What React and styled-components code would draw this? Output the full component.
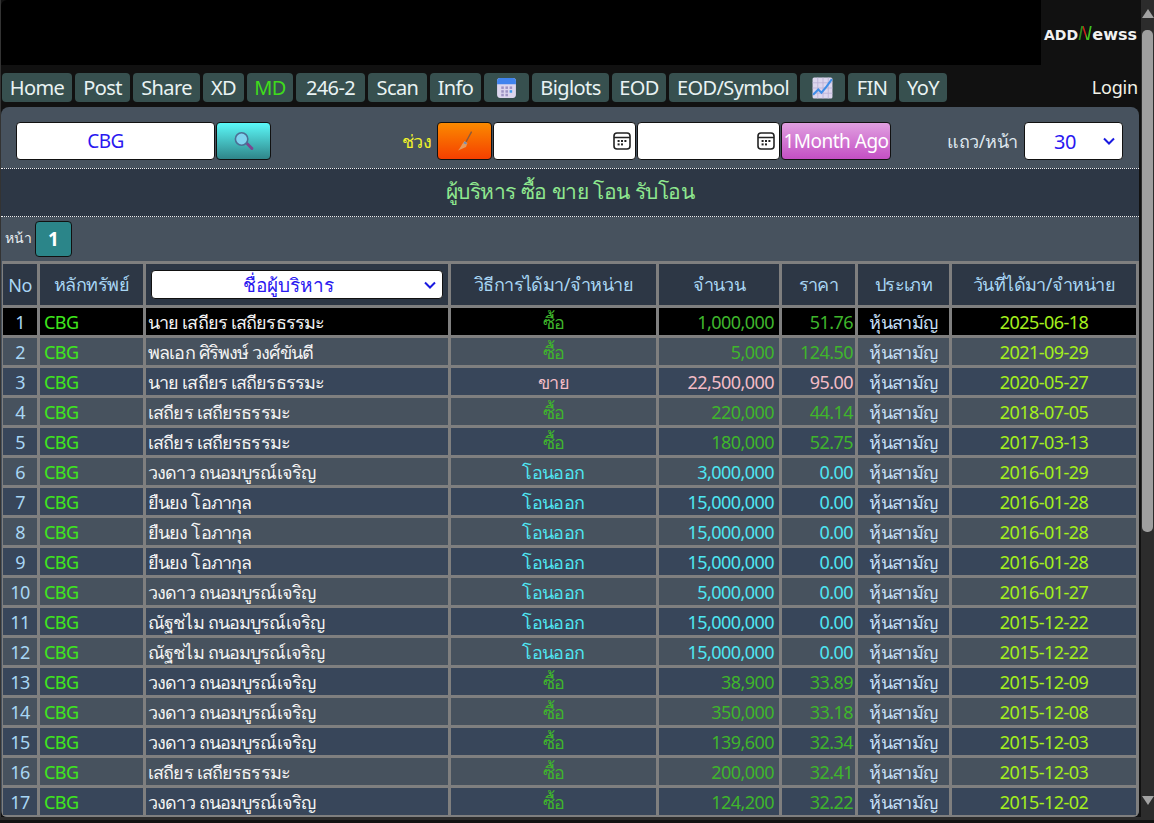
import React from "react";
import styled, { createGlobalStyle } from "styled-components";

const GlobalStyle = createGlobalStyle`
  html, body {
    margin: 0;
    height: 100%;
    overflow: hidden;
    background: #111;
  }
  * { box-sizing: border-box; }
`;

const FONT = `"Noto Sans", "Open Sans", "Liberation Sans", sans-serif`;

const NAV = [
  { label: "Home", width: 70 },
  { label: "Post", width: 55 },
  { label: "Share", width: 67 },
  { label: "XD", width: 41 },
  { label: "MD", width: 46 },
  { label: "246-2", width: 69 },
  { label: "Scan", width: 59 },
  { label: "Info", width: 51 },
  { icon: "calendar", width: 45 },
  { label: "Biglots", width: 77 },
  { label: "EOD", width: 54 },
  { label: "EOD/Symbol", width: 128 },
  { icon: "chart", width: 45 },
  { label: "FIN", width: 48 },
  { label: "YoY", width: 48 },
];

const SET = "เสถียร เสถียรธรรมะ";
const NAI = "นาย เสถียร เสถียรธรรมะ";
const WONG = "วงดาว ถนอมบูรณ์เจริญ";
const YUEN = "ยืนยง โอภากุล";
const NAT = "ณัฐชไม ถนอมบูรณ์เจริญ";
const BUY = "ซื้อ";
const SELL = "ขาย";
const OUT = "โอนออก";

const rows = [
  [NAI, BUY, "1,000,000", "51.76", "2025-06-18"],
  ["พลเอก ศิริพงษ์ วงศ์ขันตี", BUY, "5,000", "124.50", "2021-09-29"],
  [NAI, SELL, "22,500,000", "95.00", "2020-05-27"],
  [SET, BUY, "220,000", "44.14", "2018-07-05"],
  [SET, BUY, "180,000", "52.75", "2017-03-13"],
  [WONG, OUT, "3,000,000", "0.00", "2016-01-29"],
  [YUEN, OUT, "15,000,000", "0.00", "2016-01-28"],
  [YUEN, OUT, "15,000,000", "0.00", "2016-01-28"],
  [YUEN, OUT, "15,000,000", "0.00", "2016-01-28"],
  [WONG, OUT, "5,000,000", "0.00", "2016-01-27"],
  [NAT, OUT, "15,000,000", "0.00", "2015-12-22"],
  [NAT, OUT, "15,000,000", "0.00", "2015-12-22"],
  [WONG, BUY, "38,900", "33.89", "2015-12-09"],
  [WONG, BUY, "350,000", "33.18", "2015-12-08"],
  [WONG, BUY, "139,600", "32.34", "2015-12-03"],
  [SET, BUY, "200,000", "32.41", "2015-12-03"],
  [WONG, BUY, "124,200", "32.22", "2015-12-02"],
];

const actionColor = { [BUY]: "#3fb52c", [SELL]: "#f3bcc6", [OUT]: "#4fe6f2" };

const CalendarEmoji = () => (
  <svg width="21" height="22" viewBox="0 0 20 21">
    <rect x="1" y="1" width="18" height="19" rx="3" fill="#dcd6ee" />
    <path d="M1 7V4a3 3 0 0 1 3-3h12a3 3 0 0 1 3 3v3z" fill="#3f83ee" />
    <g fill="#9d93c4">
      <rect x="5" y="9" width="2.4" height="2.4" />
      <rect x="9" y="9" width="2.4" height="2.4" />
      <rect x="13" y="9" width="2.4" height="2.4" />
      <rect x="5" y="12.6" width="2.4" height="2.4" />
      <rect x="9" y="12.6" width="2.4" height="2.4" />
      <rect x="5" y="16" width="2.4" height="2.4" />
      <rect x="9" y="16" width="2.4" height="2.4" />
    </g>
    <rect x="13" y="12.6" width="2.4" height="2.4" fill="#3f9bee" />
  </svg>
);

const ChartEmoji = () => (
  <svg width="21" height="22" viewBox="0 0 20 21">
    <rect x="0.5" y="0.5" width="19" height="20" rx="1.5" fill="#dcd6ee" />
    <path d="M0.5 5.5h19M0.5 10.5h19M0.5 15.5h19M5.5 .5v20M10.5 .5v20M15.5 .5v20" stroke="#b9b1d6" strokeWidth="0.8" />
    <path d="M1 17l5-5 3 3 5-6 5-7" fill="none" stroke="#3f8ee8" strokeWidth="2" />
  </svg>
);

const Magnifier = () => (
  <svg width="20" height="21" viewBox="0 0 20 21">
    <path d="M11.5 13l2-2 5.5 5.5a1.5 1.5 0 0 1-2 2.2z" fill="#7a4790" />
    <circle cx="7.6" cy="8" r="6.2" fill="#7fd3ef" stroke="#4c6f95" strokeWidth="1.6" />
  </svg>
);

const Broom = () => (
  <svg width="16" height="20" viewBox="0 0 16 20">
    <path d="M14.6 0.6L8.4 12" stroke="#8a5a3a" strokeWidth="1.4" />
    <path d="M7.5 10l3 2-1.5 4-8 3.4c2-2 3.4-5.4 6.5-9.4z" fill="#e89a5c" />
    <path d="M7.6 10.6l2.2 1.5-.5 1.5-2.8-1.4z" fill="#6f8fb8" />
  </svg>
);

const PickerIcon = () => (
  <svg width="18" height="18" viewBox="0 0 18 18">
    <rect x="1" y="1" width="16" height="16" rx="3" fill="none" stroke="#222" strokeWidth="1.6" />
    <path d="M1 5.5h16" stroke="#222" strokeWidth="1.6" />
    <g fill="#222">
      <rect x="4.6" y="8" width="2" height="2" />
      <rect x="8" y="8" width="2" height="2" />
      <rect x="11.4" y="8" width="2" height="2" />
      <rect x="4.6" y="11.4" width="2" height="2" />
      <rect x="8" y="11.4" width="2" height="2" />
    </g>
  </svg>
);

const Chevron = () => (
  <svg width="12" height="8" viewBox="0 0 12 8">
    <path d="M1 1.5l5 5 5-5" fill="none" stroke="#1a1ae0" strokeWidth="2" />
  </svg>
);

const Page = styled.div`
  width: 1154px;
  height: 823px;
  display: flex;
  flex-direction: column;
  overflow: hidden;
  background: #111;
  font-family: ${FONT};
`;

const Body = styled.div`
  height: 817px;
  flex-shrink: 0;
  display: flex;
`;

const BottomBand = styled.div`
  height: 3px;
  flex-shrink: 0;
  background: #2c2c2c;
`;

const Main = styled.div`
  width: 1141px;
  display: flex;
  flex-direction: column;
  border-left: 1px solid #333;
`;

const ScrollBar = styled.div`
  width: 13px;
  background: #2c2c2c;
  display: flex;
  flex-direction: column;
  align-items: center;
  padding: 9px 0 12px;
`;

const ArrowUp = styled.div`
  border-left: 6px solid transparent;
  border-right: 6px solid transparent;
  border-bottom: 9px solid #a3a3a3;
`;

const ArrowDown = styled.div`
  border-left: 6px solid transparent;
  border-right: 6px solid transparent;
  border-top: 9px solid #a3a3a3;
`;

const Thumb = styled.div`
  width: 11px;
  height: 502px;
  margin: 12px 0 auto;
  border-radius: 5px;
  background: #9f9f9f;
`;

const TopBar = styled.div`
  height: 65px;
  flex-shrink: 0;
  display: flex;
`;

const Banner = styled.div`
  width: 1040px;
  background: #000;
  border-top-left-radius: 6px;
`;

const Logo = styled.div`
  flex: 1;
  display: flex;
  align-items: baseline;
  justify-content: center;
  padding: 22px 1px 0 0;
  color: #f1f1f1;
  font: 700 14px "DejaVu Sans", sans-serif;
  white-space: nowrap;
`;

const LogoN = styled.span`
  font-size: 19px;
  font-style: italic;
  font-weight: 400;
  background: linear-gradient(90deg, #2c8a1c 0 35%, #c8201a 35% 60%, #3fc01f 60%);
  -webkit-background-clip: text;
  background-clip: text;
  color: transparent;
`;

const LogoTail = styled.span`
  font-size: 16px;
`;

const NavBar = styled.nav`
  height: 42px;
  flex-shrink: 0;
  display: flex;
  align-items: flex-start;
  gap: 3px;
  padding: 8px 0 0 1px;
`;

const NavItem = styled.a`
  width: ${(p) => p.$width}px;
  height: 29px;
  display: flex;
  align-items: center;
  justify-content: center;
  background: #37504f;
  border-radius: 4px;
  font-size: 20px;
  letter-spacing: -0.6px;
  color: ${(p) => (p.$active ? "#3fdc1c" : "#e9f3f3")};
`;

const LoginLink = styled.a`
  margin-left: auto;
  margin-right: 3px;
  padding-top: 2px;
  font-size: 18px;
  letter-spacing: -0.2px;
  color: #f3f3e8;
`;

const Panel = styled.main`
  flex: 1;
  width: 1138px;
  background: #47525e;
  border-radius: 8px 8px 6px 6px;
  overflow: hidden;
  display: flex;
  flex-direction: column;
`;

const Filters = styled.div`
  height: 61px;
  flex-shrink: 0;
  padding: 15px 16px 0 15px;
  display: flex;
  align-items: flex-start;
`;

const boxStyles = `
  height: 38px;
  background: #fff;
  border: 1px solid #111;
  border-radius: 4px;
  display: flex;
  align-items: center;
`;

const SymbolBox = styled.div`
  ${boxStyles}
  width: 199px;
  padding-right: 20px;
  justify-content: center;
  color: #2a18f0;
  font-size: 19px;
  letter-spacing: -0.5px;
`;

const ColorButton = styled.button`
  height: 38px;
  width: ${(p) => p.$width}px;
  margin-left: 1px;
  padding: 0;
  border: 1px solid #111;
  border-radius: 4px;
  background: linear-gradient(${(p) => p.$from}, ${(p) => p.$to});
  color: #fff;
  font: inherit;
  font-size: 19px;
  letter-spacing: -0.5px;
  white-space: nowrap;
  display: flex;
  align-items: center;
  justify-content: center;
`;

const RangeLabel = styled.span`
  margin-left: auto;
  margin-right: 5px;
  line-height: 38px;
  color: #f2f22a;
  font-size: 18px;
  letter-spacing: -0.6px;
`;

const DateBox = styled.div`
  ${boxStyles}
  width: 143px;
  margin-left: 1px;
  justify-content: flex-end;
  padding-right: 4px;
`;

const RowsLabel = styled.span`
  width: 72px;
  margin-left: 56px;
  margin-right: 5px;
  line-height: 38px;
  color: #dfe7ee;
  font-size: 18px;
  letter-spacing: -0.4px;
  white-space: nowrap;
`;

const RowsSelect = styled.div`
  ${boxStyles}
  width: 99px;
  padding: 0 7px 0 2px;
  color: #2a18f0;
  font-size: 20px;
  letter-spacing: -0.5px;
`;

const SelectValue = styled.span`
  flex: 1;
  text-align: center;
`;

const TitleBand = styled.h1`
  height: 49px;
  flex-shrink: 0;
  margin: 0;
  background: #2d3745;
  border-top: 1px dotted #eee;
  border-bottom: 1px dotted #eee;
  text-align: center;
  color: #8fe88f;
  font-size: 21px;
  font-weight: 400;
  letter-spacing: -0.5px;
  line-height: 44px;
`;

const Pager = styled.div`
  height: 44px;
  flex-shrink: 0;
  padding: 4px 0 0 4px;
  display: flex;
  align-items: flex-start;
  gap: 3px;
  color: #e8eef2;
  font-size: 14px;
`;

const PagerLabel = styled.span`
  line-height: 34px;
`;

const PagerButton = styled.div`
  width: 37px;
  height: 36px;
  background: #2b8589;
  border: 1px solid #111;
  border-radius: 4px;
  display: flex;
  align-items: center;
  justify-content: center;
  color: #fff;
  font-size: 19px;
  font-weight: 700;
`;

const Table = styled.table`
  width: 1137px;
  margin-left: 1px;
  border-collapse: collapse;
  table-layout: fixed;
  border: 1px solid #7f7f7f;
  font-size: 18px;
  letter-spacing: -0.55px;
`;

const Th = styled.th`
  height: 44px;
  padding: 0;
  background: #2d3745;
  border: 3px solid #7f7f7f;
  color: #a8d6f4;
  font-weight: 400;
  text-align: center;
  &:first-child { border-left-width: 1px; }
`;

const NameFilter = styled.div`
  ${boxStyles}
  height: 29px;
  margin: 0 5px;
  padding-right: 6px;
  color: #2a18f0;
  font-size: 19px;
  letter-spacing: 0;
`;

const Tr = styled.tr`
  background: ${(p) => (p.$first ? "#000" : p.$even ? "#47525e" : "#38465a")};
`;

const Td = styled.td`
  height: 30px;
  padding: 0 ${(p) => p.$pad || 2}px;
  border: 3px solid #7f7f7f;
  color: ${(p) => p.$color};
  text-align: ${(p) => p.$align || "left"};
  white-space: nowrap;
  overflow: hidden;
  line-height: 24px;
  &:first-child { border-left-width: 1px; }
`;

const NameCell = styled(Td)`
  letter-spacing: -0.85px;
`;

export default function App() {
  return (
    <Page>
      <GlobalStyle />
      <Body>
        <Main>
          <TopBar>
            <Banner />
            <Logo>
              ADD<LogoN>N</LogoN>
              <LogoTail>ewss</LogoTail>
            </Logo>
          </TopBar>
          <NavBar>
            {NAV.map((item) => (
              <NavItem key={item.label || item.icon} $width={item.width} $active={item.label === "MD"}>
                {item.icon === "calendar" && <CalendarEmoji />}
                {item.icon === "chart" && <ChartEmoji />}
                {item.label}
              </NavItem>
            ))}
            <LoginLink>Login</LoginLink>
          </NavBar>
          <Panel>
            <Filters>
              <SymbolBox>CBG</SymbolBox>
              <ColorButton $width={55} $from="#5bf8f8" $to="#2f8589">
                <Magnifier />
              </ColorButton>
              <RangeLabel>ช่วง</RangeLabel>
              <ColorButton $width={55} $from="#fb8a00" $to="#f53f00">
                <Broom />
              </ColorButton>
              <DateBox>
                <PickerIcon />
              </DateBox>
              <DateBox>
                <PickerIcon />
              </DateBox>
              <ColorButton $width={110} $from="#e0a0e0" $to="#c44fc4">
                1Month Ago
              </ColorButton>
              <RowsLabel>แถว/หน้า</RowsLabel>
              <RowsSelect>
                <SelectValue>30</SelectValue>
                <Chevron />
              </RowsSelect>
            </Filters>
            <TitleBand>ผู้บริหาร ซื้อ ขาย โอน รับโอน</TitleBand>
            <Pager>
              <PagerLabel>หน้า</PagerLabel>
              <PagerButton>1</PagerButton>
            </Pager>
            <Table>
              <colgroup>
                <col width="36" />
                <col width="106" />
                <col width="305" />
                <col width="208" />
                <col width="123" />
                <col width="76" />
                <col width="94" />
                <col width="187" />
              </colgroup>
              <thead>
                <tr>
                  <Th>No</Th>
                  <Th>หลักทรัพย์</Th>
                  <Th>
                    <NameFilter>
                      <SelectValue>ชื่อผู้บริหาร</SelectValue>
                      <Chevron />
                    </NameFilter>
                  </Th>
                  <Th>วิธีการได้มา/จำหน่าย</Th>
                  <Th>จำนวน</Th>
                  <Th>ราคา</Th>
                  <Th>ประเภท</Th>
                  <Th>วันที่ได้มา/จำหน่าย</Th>
                </tr>
              </thead>
              <tbody>
                {rows.map(([name, action, qty, price, date], i) => (
                  <Tr key={i} $first={i === 0} $even={i % 2 === 1}>
                    <Td $align="center" $color="#a8d6f4">{i + 1}</Td>
                    <Td $pad={4} $color="#3fe81c">CBG</Td>
                    <NameCell $color="#f4f4f4">{name}</NameCell>
                    <Td $align="center" $color={actionColor[action]}>{action}</Td>
                    <Td $align="right" $pad={5} $color={actionColor[action]}>{qty}</Td>
                    <Td $align="right" $color={actionColor[action]}>{price}</Td>
                    <Td $align="center" $color="#c6dff5">หุ้นสามัญ</Td>
                    <Td $align="center" $color="#a4f01c">{date}</Td>
                  </Tr>
                ))}
              </tbody>
            </Table>
          </Panel>
        </Main>
        <ScrollBar>
          <ArrowUp />
          <Thumb />
          <ArrowDown />
        </ScrollBar>
      </Body>
      <BottomBand />
    </Page>
  );
}
